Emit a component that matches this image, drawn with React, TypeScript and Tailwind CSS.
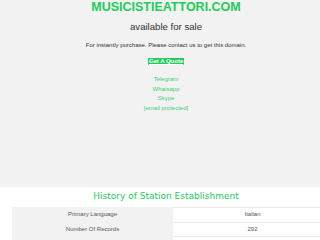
import React from 'react'

const rows = [
  { label: 'Primary Language', value: 'Italian' },
  { label: 'Number Of Records', value: '292' },
  { label: '', value: '' },
]

export default function App(): React.JSX.Element {
  return (
    <div className="w-[320px] h-[240px] overflow-hidden bg-white font-['Liberation_Sans',Arial,sans-serif]">
      <div className="w-[332px]">
        {/* 上段: ドメイン販売 */}
        <div className="bg-[#f2f2f2] h-[187px] flex flex-col items-center">
          <h1 className="text-[12.5px] leading-[15px] font-bold text-[#22cc5a]">MUSICISTIEATTORI.COM</h1>
          <p className="mt-[6px] text-[9.6px] leading-[11px] text-[#333]">available for sale</p>
          <p className="mt-[9px] text-[6px] leading-[8px] text-[#333]">
            For instantly purchase. Please contact us to get this domain.
          </p>
          <a className="mt-[9px] bg-[#22cc5a] text-white font-bold text-[6px] leading-[7px] px-[1px] underline">
            Get A Quote
          </a>
          <div className="mt-[10px] flex flex-col items-center text-[6px] leading-[9.7px] text-[#3fd06e]">
            <a>Telegram</a>
            <a>Whatsapp</a>
            <a>Skype</a>
            <a>[email&#160;protected]</a>
          </div>
        </div>

        {/* 下段: テーブル */}
        <div className="pt-[3px]">
          <h2 className="text-center text-[9px] leading-[12px] text-[#22cc5a] font-['Comic_Sans_MS','DejaVu_Sans',sans-serif]">
            History of Station Establishment
          </h2>
          <table className="ml-[12px] mt-[5px] w-[320px] border-collapse text-[6px] text-[#555]">
            <tbody>
              {rows.map((r, i) => (
                <tr key={i} className="h-[14.5px]">
                  <td className="w-[161px] bg-[#f2f2f2] text-center border-t border-[#f2f2f2]">{r.label}</td>
                  <td className="text-center border-t border-[#e9e9e9]">{r.value}</td>
                </tr>
              ))}
            </tbody>
          </table>
        </div>
      </div>
    </div>
  )
}
